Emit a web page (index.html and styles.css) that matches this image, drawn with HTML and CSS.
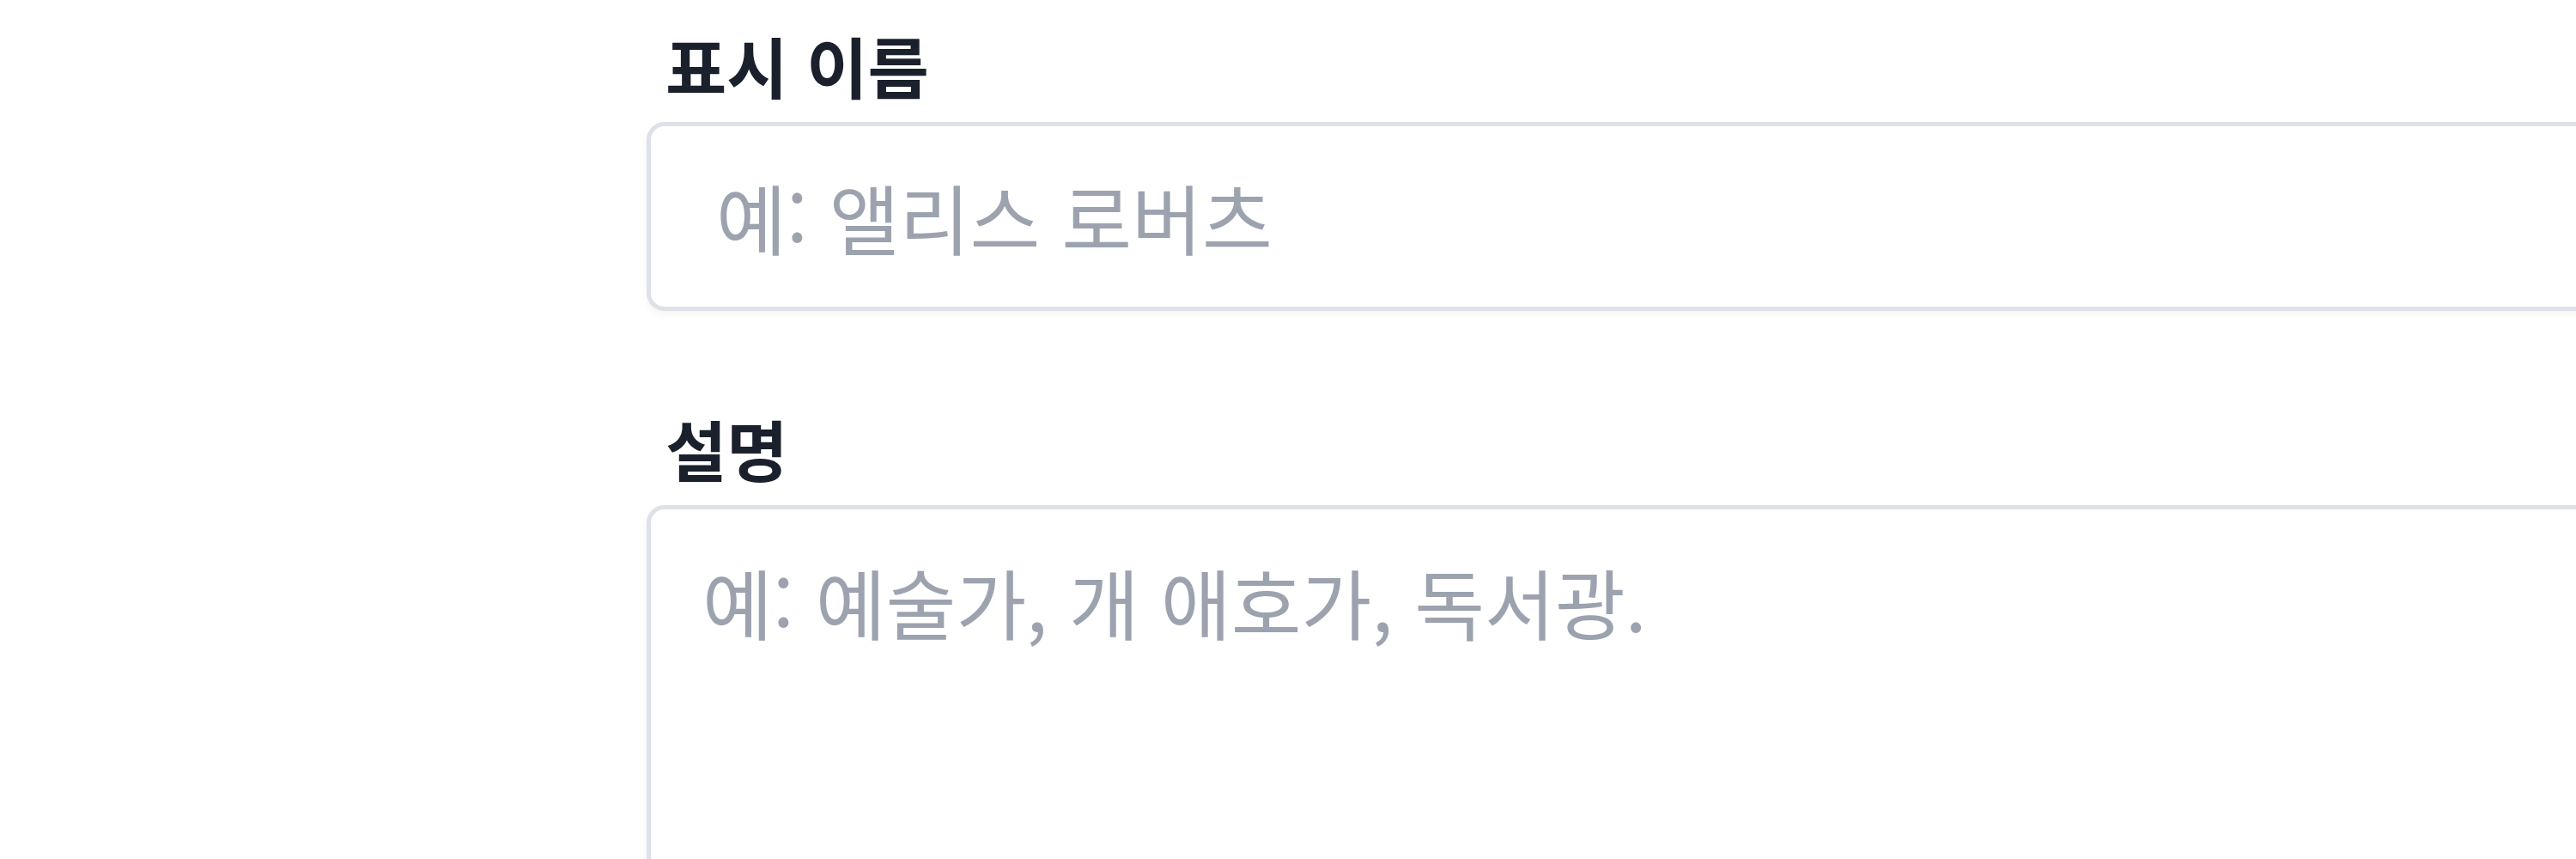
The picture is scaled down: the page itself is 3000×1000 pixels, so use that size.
FILE: index.html
```html
<!DOCTYPE html>
<html lang="ko">
<head>
<meta charset="utf-8">
<title>프로필 양식</title>
<link rel="stylesheet" href="styles.css">
</head>
<body>
<form class="form">
  <div class="field">
    <label class="label" for="display-name">표시 이름</label>
    <input class="input" id="display-name" type="text" placeholder="예: 앨리스 로버츠">
  </div>
  <div class="field">
    <label class="label" for="description">설명</label>
    <textarea class="textarea" id="description" placeholder="예: 예술가, 개 애호가, 독서광."></textarea>
  </div>
</form>
</body>
</html>
```
FILE: styles.css
```css
html, body {
  margin: 0;
  padding: 0;
  background: #ffffff;
  overflow: hidden;
}

body {
  font-family: "Noto Sans CJK KR", "Noto Sans", sans-serif;
}

.form {
  display: flex;
  flex-direction: column;
  gap: 109px;
  padding: 25px 0 0 753px;
}

.field {
  display: flex;
  flex-direction: column;
  width: 2600px;
}

.label {
  display: block;
  font-size: 77.5px;
  line-height: 100px;
  font-weight: 700;
  color: #1a202c;
  margin-bottom: 16.8px;
  padding-left: 22px;
}

.input,
.textarea {
  box-sizing: border-box;
  width: 100%;
  font-family: inherit;
  font-size: 89px;
  line-height: 124.8px;
  color: #1a202c;
  background: #ffffff;
  border: 5.2px solid #dde2ea;
  border-radius: 20.8px;
  box-shadow: 0 5px 10px rgba(0, 0, 0, 0.04);
  outline: none;
  margin: 0;
}

.input {
  height: 220px;
  padding: 42px 76px 42px;
}

.textarea {
  height: 700px;
  padding: 45.6px 60px;
  resize: none;
}

.input::placeholder,
.textarea::placeholder {
  color: #9ca3af;
  opacity: 1;
}
```
